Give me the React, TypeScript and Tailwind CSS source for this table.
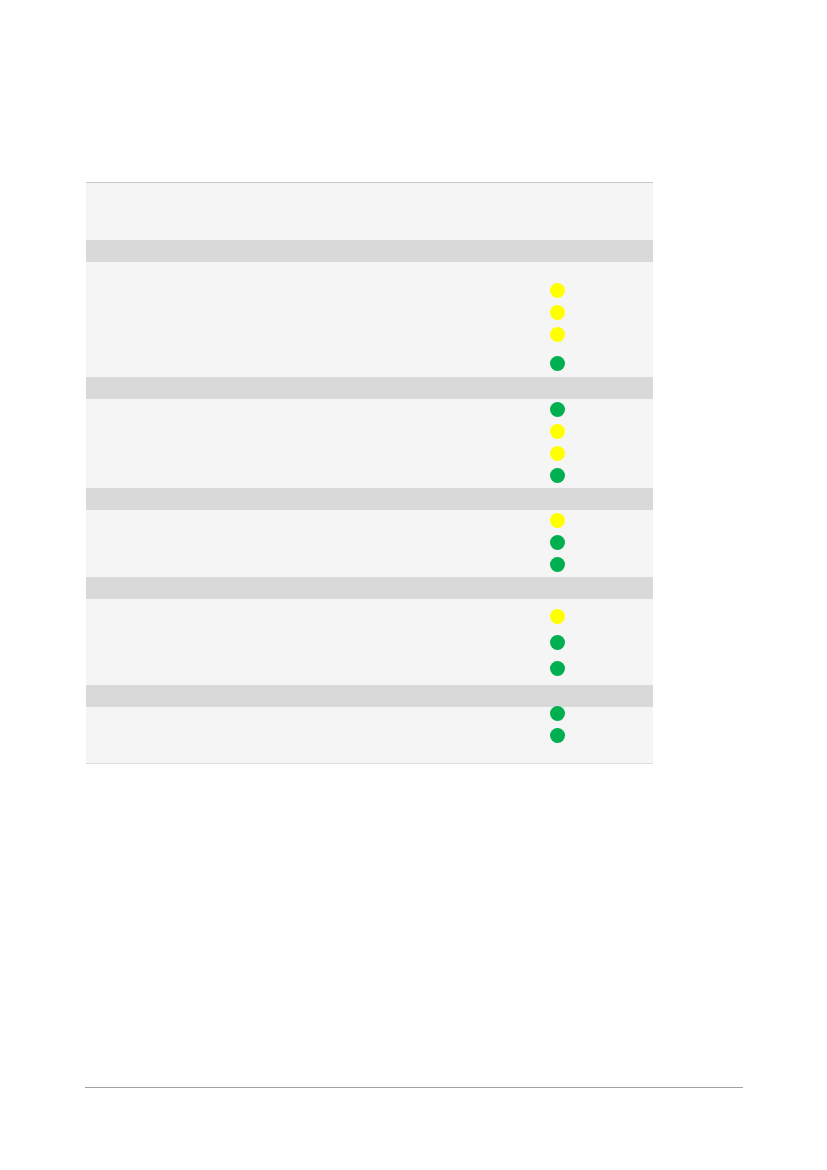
import React from "react";

const Y = "bg-[#ffff00]";
const G = "bg-[#00b050]";

function Dot({ c, mt }: { c: string; mt: string }) {
  return <div className={`w-[15px] h-[15px] rounded-full ${c} ${mt}`} />;
}

function Band() {
  return <div className="h-[22px] bg-[#d9d9d9]" />;
}

export default function App() {
  return (
    <div className="w-[827px] h-[1170px] bg-white pt-[182px] font-['Liberation_Sans',sans-serif]">
      <div className="ml-[86px] w-[567px] bg-[#f5f5f5] border-t border-b border-t-[#c8c8c8] border-b-[#dcdcdc]">
        <div className="h-[57px]" />
        <Band />
        <div className="h-[115px] pl-[464px] flex flex-col">
          <Dot c={Y} mt="mt-[21px]" />
          <Dot c={Y} mt="mt-[7px]" />
          <Dot c={Y} mt="mt-[7px]" />
          <Dot c={G} mt="mt-[14px]" />
        </div>
        <Band />
        <div className="h-[89px] pl-[464px] flex flex-col">
          <Dot c={G} mt="mt-[3px]" />
          <Dot c={Y} mt="mt-[7px]" />
          <Dot c={Y} mt="mt-[7px]" />
          <Dot c={G} mt="mt-[7px]" />
        </div>
        <Band />
        <div className="h-[67px] pl-[464px] flex flex-col">
          <Dot c={Y} mt="mt-[3px]" />
          <Dot c={G} mt="mt-[7px]" />
          <Dot c={G} mt="mt-[7px]" />
        </div>
        <Band />
        <div className="h-[86px] pl-[464px] flex flex-col">
          <Dot c={Y} mt="mt-[10px]" />
          <Dot c={G} mt="mt-[11px]" />
          <Dot c={G} mt="mt-[11px]" />
        </div>
        <Band />
        <div className="h-[56px] pl-[464px] flex flex-col">
          <Dot c={G} mt="mt-[-1px]" />
          <Dot c={G} mt="mt-[7px]" />
        </div>
      </div>
      <div className="ml-[85px] w-[658px] h-px bg-[#a0a0a0] mt-[323px]" />
    </div>
  );
}
